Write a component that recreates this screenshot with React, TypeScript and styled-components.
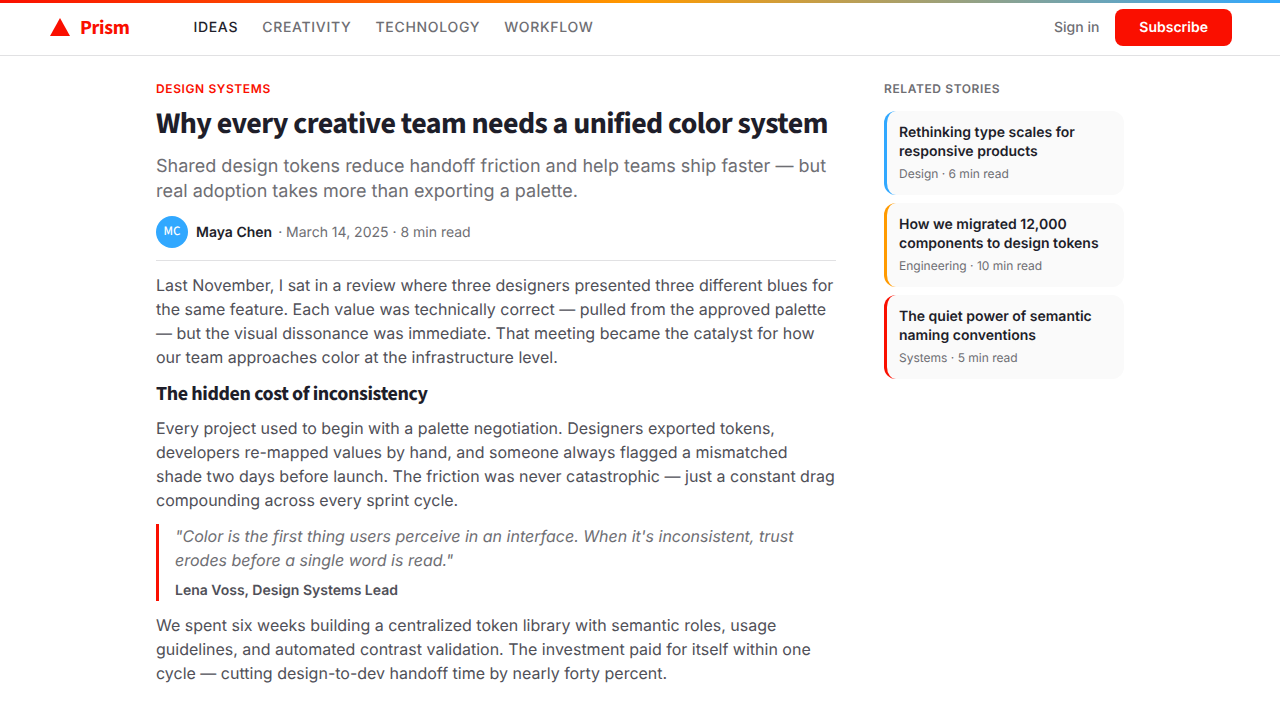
import React from "react";
import styled, { createGlobalStyle } from "styled-components";

const color = {
  red: "#fa0f00",
  orange: "#ff9a00",
  blue: "#31a8ff",
  ink: "#1e1e2a",
  body: "#505058",
  muted: "#6e6e73",
  line: "#e1e1e3",
  surface: "#fafafa",
};

const display = `"Source Sans 3", "Noto Sans CJK SC", sans-serif`;

const GlobalStyle = createGlobalStyle`
  *, *::before, *::after { box-sizing: border-box; }
  body {
    margin: 0;
    background: #fff;
    color: ${color.body};
    font: 400 16px/24px Inter, sans-serif;
    text-rendering: geometricPrecision;
    -webkit-font-smoothing: antialiased;
  }
  h1, h2, h3, p, blockquote, figure { margin: 0; }
  a { color: inherit; text-decoration: none; }
  button { text-rendering: inherit; }
`;

const Header = styled.header`
  position: relative;
  display: flex;
  align-items: center;
  height: 56px;
  padding: 0 48px;
  border-bottom: 1px solid ${color.line};

  &::before {
    content: "";
    position: absolute;
    inset: 0 0 auto;
    height: 3px;
    background: linear-gradient(90deg, ${color.red}, ${color.orange} 50%, ${color.blue});
  }
`;

const Brand = styled.a`
  display: flex;
  align-items: center;
  gap: 8px;
  margin-right: 64px;
  font: 700 20px/24px ${display};
  letter-spacing: -0.02em;

  && { color: ${color.red}; }
`;

const Nav = styled.nav`
  display: flex;
  flex: 1;
  gap: 24px;
`;

const NavLink = styled.a<{ $active?: boolean }>`
  font-size: 14px;
  line-height: 20px;
  font-weight: 500;
  letter-spacing: 0.05em;
  text-transform: uppercase;

  && { color: ${(p) => (p.$active ? color.ink : color.muted)}; }
`;

const Actions = styled.div`
  display: flex;
  align-items: center;
  gap: 16px;
`;

const SignIn = styled.a`
  font-size: 14px;
  line-height: 20px;
  font-weight: 500;

  && { color: ${color.muted}; }
`;

const Subscribe = styled.button`
  padding: 8px 24px;
  border: 0;
  border-radius: 8px;
  background: ${color.red};
  color: #fff;
  font: 600 14px/21px Inter, sans-serif;
  cursor: pointer;
`;

const Layout = styled.main`
  display: grid;
  grid-template-columns: minmax(0, 680px) 240px;
  justify-content: center;
  align-items: start;
  gap: 48px;
  padding: 24px 48px;
`;

const Article = styled.article`
  display: flex;
  flex-direction: column;
`;

const Eyebrow = styled.p`
  color: ${color.red};
  font-size: 12px;
  line-height: 18px;
  font-weight: 600;
  letter-spacing: 0.05em;
  text-transform: uppercase;
`;

const Title = styled.h1`
  margin-top: 8px;
  color: ${color.ink};
  font: 700 30px/36px ${display};
  letter-spacing: -0.02em;
`;

const Lede = styled.p`
  margin-top: 12px;
  color: ${color.muted};
  font-size: 18px;
  line-height: 25px;
`;

const Byline = styled.div`
  display: flex;
  align-items: center;
  gap: 8px;
  margin-top: 12px;
  padding-bottom: 12px;
  border-bottom: 1px solid ${color.line};
  color: ${color.muted};
  font-size: 14px;
  line-height: 21px;
`;

const BylineText = styled.p`
  display: flex;
  flex-wrap: wrap;
  gap: 6px;
`;

const Avatar = styled.span`
  display: grid;
  place-items: center;
  width: 32px;
  height: 32px;
  border-radius: 50%;
  background: ${color.blue};
  color: #fff;
  font: 500 13px/20px ${display};
`;

const Author = styled.strong`
  color: ${color.ink};
  font-weight: 600;
`;

const Paragraph = styled.p`
  margin-top: 12px;
`;

const Subheading = styled.h2`
  margin-top: 12px;
  color: ${color.ink};
  font: 700 20px/27px ${display};
  letter-spacing: -0.02em;

  & + ${Paragraph} { margin-top: 8px; }
`;

const Quote = styled.figure`
  margin-top: 12px;
  padding-left: 16px;
  border-left: 3px solid ${color.red};
`;

const QuoteText = styled.blockquote`
  color: ${color.muted};
  font-style: italic;
`;

const Attribution = styled.figcaption`
  margin-top: 8px;
  font-size: 14px;
  line-height: 21px;
  font-weight: 600;
`;

const Sidebar = styled.aside`
  display: flex;
  flex-direction: column;
  gap: 8px;
`;

const SidebarTitle = styled.h2`
  margin-bottom: 5px;
  color: ${color.muted};
  font-size: 12px;
  line-height: 18px;
  font-weight: 600;
  letter-spacing: 0.05em;
  text-transform: uppercase;
`;

const StoryCard = styled.a<{ $accent: string }>`
  display: block;
  padding: 12px;
  border-left: 3px solid ${(p) => p.$accent};
  border-radius: 12px;
  background: ${color.surface};
`;

const StoryTitle = styled.h3`
  color: ${color.ink};
  font-size: 14px;
  line-height: 19px;
  font-weight: 600;
`;

const StoryMeta = styled.p`
  margin-top: 4px;
  color: ${color.muted};
  font-size: 12px;
  line-height: 18px;
`;

const sections = ["Ideas", "Creativity", "Technology", "Workflow"];

const stories = [
  { title: "Rethinking type scales for responsive products", meta: "Design · 6 min read", accent: color.blue },
  { title: "How we migrated 12,000 components to design tokens", meta: "Engineering · 10 min read", accent: color.orange },
  { title: "The quiet power of semantic naming conventions", meta: "Systems · 5 min read", accent: color.red },
];

export default function App() {
  return (
    <>
      <GlobalStyle />
      <Header>
        <Brand href="#">
          <svg width="24" height="24" viewBox="0 0 24 24" aria-hidden="true">
            <path d="M12 2L22 20H2Z" fill={color.red} />
          </svg>
          Prism
        </Brand>
        <Nav aria-label="Sections">
          {sections.map((name, i) => (
            <NavLink key={name} href="#" $active={i === 0} aria-current={i === 0 ? "page" : undefined}>
              {name}
            </NavLink>
          ))}
        </Nav>
        <Actions>
          <SignIn href="#">Sign in</SignIn>
          <Subscribe type="button">Subscribe</Subscribe>
        </Actions>
      </Header>
      <Layout>
        <Article>
          <Eyebrow>Design Systems</Eyebrow>
          <Title>Why every creative team needs a unified color system</Title>
          <Lede>
            Shared design tokens reduce handoff friction and help teams ship faster — but real adoption takes more
            than exporting a palette.
          </Lede>
          <Byline>
            <Avatar aria-hidden="true">MC</Avatar>
            <BylineText>
              <Author>Maya Chen</Author>
              <span>· March 14, 2025 · 8 min read</span>
            </BylineText>
          </Byline>
          <Paragraph>
            Last November, I sat in a review where three designers presented three different blues for the same
            feature. Each value was technically correct — pulled from the approved palette — but the visual
            dissonance was immediate. That meeting became the catalyst for how our team approaches color at the
            infrastructure level.
          </Paragraph>
          <Subheading>The hidden cost of inconsistency</Subheading>
          <Paragraph>
            Every project used to begin with a palette negotiation. Designers exported tokens, developers re-mapped
            values by hand, and someone always flagged a mismatched shade two days before launch. The friction was
            never catastrophic — just a constant drag compounding across every sprint cycle.
          </Paragraph>
          <Quote>
            <QuoteText>
              "Color is the first thing users perceive in an interface. When it's inconsistent, trust erodes before a
              single word is read."
            </QuoteText>
            <Attribution>Lena Voss, Design Systems Lead</Attribution>
          </Quote>
          <Paragraph>
            We spent six weeks building a centralized token library with semantic roles, usage guidelines, and
            automated contrast validation. The investment paid for itself within one cycle — cutting design-to-dev
            handoff time by nearly forty percent.
          </Paragraph>
        </Article>
        <Sidebar>
          <SidebarTitle>Related Stories</SidebarTitle>
          {stories.map((story) => (
            <StoryCard key={story.title} href="#" $accent={story.accent}>
              <StoryTitle>{story.title}</StoryTitle>
              <StoryMeta>{story.meta}</StoryMeta>
            </StoryCard>
          ))}
        </Sidebar>
      </Layout>
    </>
  );
}
